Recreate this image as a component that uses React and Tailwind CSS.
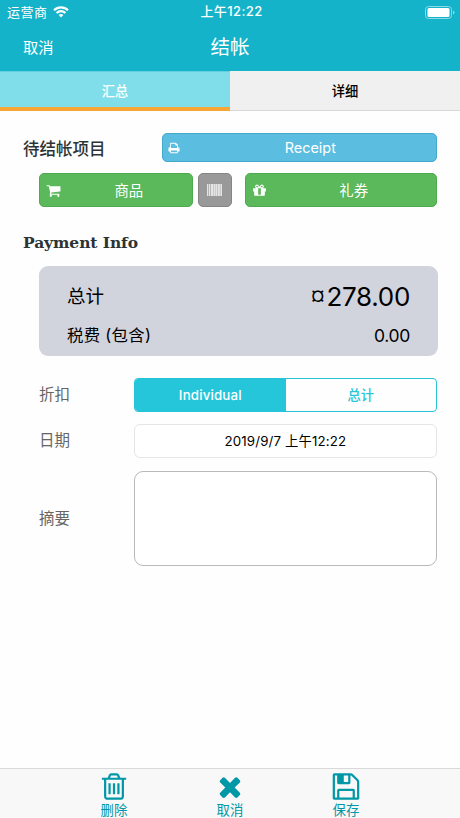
import React from "react";

const icons = {
  trash:
    "M704 736v576q0 14-9 23t-23 9h-64q-14 0-23-9t-9-23v-576q0-14 9-23t23-9h64q14 0 23 9t9 23zm256 0v576q0 14-9 23t-23 9h-64q-14 0-23-9t-9-23v-576q0-14 9-23t23-9h64q14 0 23 9t9 23zm256 0v576q0 14-9 23t-23 9h-64q-14 0-23-9t-9-23v-576q0-14 9-23t23-9h64q14 0 23 9t9 23zm128 724v-948h-896v948q0 22 7 40.5t14.5 27 10.5 8.5h832q3 0 10.5-8.5t14.5-27 7-40.5zm-672-1076h448l-48-117q-7-9-17-11h-317q-10 2-17 11zm928 32v64q0 14-9 23t-23 9h-96v948q0 83-47 143.5t-113 60.5h-832q-66 0-113-58.5t-47-141.5v-952h-96q-14 0-23-9t-9-23v-64q0-14 9-23t23-9h309l70-167q15-37 54-63t79-26h320q40 0 79 26t54 63l70 167h309q14 0 23 9t9 23z",
  times:
    "M1490 1322q0 40-28 68l-136 136q-28 28-68 28t-68-28l-294-294-294 294q-28 28-68 28t-68-28l-136-136q-28-28-28-68t28-68l294-294-294-294q-28-28-28-68t28-68l136-136q28-28 68-28t68 28l294 294 294-294q28-28 68-28t68 28l136 136q28 28 28 68t-28 68l-294 294 294 294q28 28 28 68z",
  save:
    "M512 1536h768v-384h-768v384zm896 0h128v-896q0-14-10-38.5t-20-34.5l-281-281q-10-10-34-20t-39-10v416q0 40-28 68t-68 28h-576q-40 0-68-28t-28-68v-416h-128v1280h128v-416q0-40 28-68t68-28h832q40 0 68 28t28 68v416zm-384-928v-320q0-13-9.5-22.5t-22.5-9.5h-192q-13 0-22.5 9.5t-9.5 22.5v320q0 13 9.5 22.5t22.5 9.5h192q13 0 22.5-9.5t9.5-22.5zm640 32v928q0 40-28 68t-68 28h-1344q-40 0-68-28t-28-68v-1344q0-40 28-68t68-28h928q40 0 88 20t76 48l280 280q28 28 48 76t20 88z",
  print:
    "M448 1536h896v-256h-896v256zm0-640h896v-384h-160q-40 0-68-28t-28-68v-160h-640v640zm1152 64q0-26-19-45t-45-19-45 19-19 45 19 45 45 19 45-19 19-45zm128 0v416q0 13-9.5 22.5t-22.5 9.5h-224v160q0 40-28 68t-68 28h-960q-40 0-68-28t-28-68v-160h-224q-13 0-22.5-9.5t-9.5-22.5v-416q0-79 56.5-135.5t135.5-56.5h64v-544q0-40 28-68t68-28h672q40 0 88 20t76 48l152 152q28 28 48 76t20 88v256h64q79 0 135.5 56.5t56.5 135.5z",
  cart:
    "M704 1536q0 52-38 90t-90 38-90-38-38-90 38-90 90-38 90 38 38 90zm896 0q0 52-38 90t-90 38-90-38-38-90 38-90 90-38 90 38 38 90zm128-1088v512q0 24-16.5 42.5t-40.5 21.5l-1044 122q13 60 13 70 0 16-24 64h920q26 0 45 19t19 45-19 45-45 19h-1024q-26 0-45-19t-19-45q0-11 8-31.5t16-36 21.5-40 15.5-29.5l-177-823h-204q-26 0-45-19t-19-45 19-45 45-19h256q16 0 28.5 6.5t19.5 15.5 13 24.5 8 26 5.5 29.5 4.5 26h1201q26 0 45 19t19 45z",
  gift:
    "M1056 1356v-716h-320v716q0 25 18 38.5t46 13.5h192q28 0 46-13.5t18-38.5zm-456-844h195l-126-161q-26-31-69-31-40 0-68 28t-28 68 28 68 68 28zm688-96q0-40-28-68t-68-28q-43 0-69 31l-125 161h194q40 0 68-28t28-68zm376 256v320q0 14-9 23t-23 9h-96v416q0 40-28 68t-68 28h-1088q-40 0-68-28t-28-68v-416h-96q-14 0-23-9t-9-23v-320q0-14 9-23t23-9h440q-93 0-158.5-65.5t-65.5-158.5 65.5-158.5 158.5-65.5q107 0 168 77l128 165 128-165q61-77 168-77 93 0 158.5 65.5t65.5 158.5-65.5 158.5-158.5 65.5h440q14 0 23 9t9 23z",
};

const Icon = ({ name, className }) => (
  <svg viewBox="0 0 1792 1792" fill="currentColor" className={className}>
    <path d={icons[name]} />
  </svg>
);

const StatusBar = () => (
  <div className="grid grid-cols-3 items-center h-6 pl-[7px] pr-[5px] text-[13px]">
    <div className="flex items-center gap-[5px]">
      <span className="tracking-[0.5px] pt-px">运营商</span>
      <svg viewBox="0 0 16 12" className="w-4 h-3" fill="none" stroke="currentColor" strokeWidth="2.1">
        <path d="M1 4.2a10 10 0 0 1 14 0M3.6 7a6.2 6.2 0 0 1 8.8 0" />
        <path d="M8 11.6 5.6 9.1a3.5 3.5 0 0 1 4.8 0z" fill="currentColor" stroke="none" />
      </svg>
    </div>
    <span className="text-center font-medium tracking-[0.4px] pl-px">上午12:22</span>
    <svg viewBox="0 0 30 13" className="w-[30px] h-[13px] justify-self-end" fill="none">
      <rect x="0.5" y="0.5" width="26" height="12" rx="3" stroke="#8ad9e5" />
      <rect x="2.5" y="2" width="22" height="9" rx="1.5" fill="white" />
      <path d="M28 4.5v4q1.5-.6 1.5-2t-1.5-2z" fill="#8ad9e5" />
    </svg>
  </div>
);

const ActionButton = ({ icon, label, className }) => (
  <button className={`flex items-center rounded-[5px] border text-white ${className}`}>
    <Icon name={icon} className={icon === "print" ? "w-3 h-3" : "w-[15px] h-[15px]"} />
    <span className="flex-1 text-center pl-[5px] pt-px">{label}</span>
  </button>
);

const Barcode = () => (
  <svg viewBox="0 0 15 12" className="w-[15px] h-3" fill="#e4e4e4">
    <path d="M0 0h1v12H0zM2 0h1v12H2zM4 0h2.4v12H4zM7 0h1.5v12H7zM9 0h1.3v12H9zM11 0h1.8v12H11zM13.5 0H15v12h-1.5z" />
    <path d="M0 0h15v12H0z" opacity=".35" />
  </svg>
);

const Field = ({ label, className, children }) => (
  <div className={`flex items-center ${className}`}>
    <span className="w-[95px] text-[15.5px] text-[#666]">{label}</span>
    {children}
  </div>
);

const TabItem = ({ icon, label }) => (
  <button className="flex flex-col items-center w-[116px] pt-[2px]">
    <Icon name={icon} className="w-8 h-8" />
    <span className="text-[13.4px] leading-[16px]">{label}</span>
  </button>
);

const App = () => {
  return (
    <div className="flex flex-col w-[460px] h-[818px] overflow-hidden bg-[#fefefe] text-black font-['Inter','Noto_Sans_CJK_SC',sans-serif]">
      <header className="h-[71px] shrink-0 bg-[#14b3c9] text-white">
        <StatusBar />
        <div className="grid grid-cols-3 items-center h-[47px] px-[23px]">
          <span className="text-[15.3px] pt-[2px]">取消</span>
          <span className="text-center text-[19.5px] leading-6 pb-px">结帐</span>
        </div>
      </header>

      <nav className="flex h-10 shrink-0 text-[13.3px] font-medium">
        <div className="flex-1 flex items-center justify-center border-t border-t-[#62d0dd] border-b-4 border-b-[#f8a736] bg-[#80deea] text-white pt-[4px]">
          汇总
        </div>
        <div className="flex-1 flex items-center justify-center border-b border-[#d8d8d8] bg-[#f0f0f0] pt-[2px]">
          详细
        </div>
      </nav>

      <main className="flex-1 px-[23px] pt-[22px]">
        <div className="flex items-center">
          <h2 className="w-[139px] text-[16.5px] leading-6 pt-[2px] font-medium text-[#2c3335]">待结帐项目</h2>
          <ActionButton
            icon="print"
            label="Receipt"
            className="w-[276px] h-[29px] pl-[5px] bg-[#5bbddf] border-[#43aacb] text-[14.4px]"
          />
        </div>

        <div className="flex mt-[11px] ml-4 text-[14.4px]">
          <ActionButton icon="cart" label="商品" className="w-[154px] h-[34px] pl-[6px] bg-[#5bb85b] border-[#4cab4d]" />
          <button className="flex items-center justify-center w-[34px] h-[34px] ml-[5px] rounded-[5px] border border-[#858585] bg-[#999]">
            <Barcode />
          </button>
          <ActionButton icon="gift" label="礼券" className="w-[193px] h-[34px] ml-[13px] pl-[6px] bg-[#5bb85b] border-[#4cab4d]" />
        </div>

        <h2 className="mt-6 leading-6 text-[15.5px] tracking-[-0.08px] font-bold text-[#2c3335] font-['DejaVu_Serif',serif]">
          Payment Info
        </h2>

        <section className="ml-4 mt-[11px] w-[399px] h-[90px] rounded-[9px] bg-[#d1d4dd] px-7 pt-4">
          <div className="flex items-center justify-between h-[30px]">
            <span className="text-[18.5px]">总计</span>
            <span className="flex items-center text-[26px] tracking-[-0.3px] pb-[2px]">
              <span className="text-[18.5px] font-medium mr-[2px]">¤</span>278.00
            </span>
          </div>
          <div className="flex items-center justify-between h-7 mt-[9px]">
            <span className="text-[16.4px] tracking-[0.3px] pt-px">税费 (包含)</span>
            <span className="text-[17.5px] tracking-[-0.3px] pt-[2px]">0.00</span>
          </div>
        </section>

        <div className="ml-4 mt-[22px]">
          <Field label="折扣" className="h-[34px]">
            <div className="flex w-[304px] h-[34px] rounded-[4px] border border-[#26c4da] overflow-hidden text-[13.3px] font-medium">
              <span className="flex items-center justify-center w-[151px] bg-[#26c6da] text-white tracking-[0.15px] pt-px">
                Individual
              </span>
              <span className="flex flex-1 items-center justify-center text-[#26c6da] pt-px">总计</span>
            </div>
          </Field>
          <Field label="日期" className="h-[34px] mt-3">
            <div className="flex items-center justify-center w-[304px] h-[34px] rounded-[6px] border border-[#e5e5e5] bg-white text-[13.3px] tracking-[0.15px] pt-px">
              2019/9/7 上午12:22
            </div>
          </Field>
          <Field label="摘要" className="h-[95px] mt-[13px]">
            <div className="w-[304px] h-[95px] rounded-[9px] border border-[#b9b9b9] bg-white" />
          </Field>
        </div>
      </main>

      <footer className="flex justify-center h-[50px] shrink-0 border-t border-[#d9d9d9] bg-[#f8f8f8] text-[#0097a7]">
        <TabItem icon="trash" label="删除" />
        <TabItem icon="times" label="取消" />
        <TabItem icon="save" label="保存" />
      </footer>
    </div>
  );
};

export default App;
